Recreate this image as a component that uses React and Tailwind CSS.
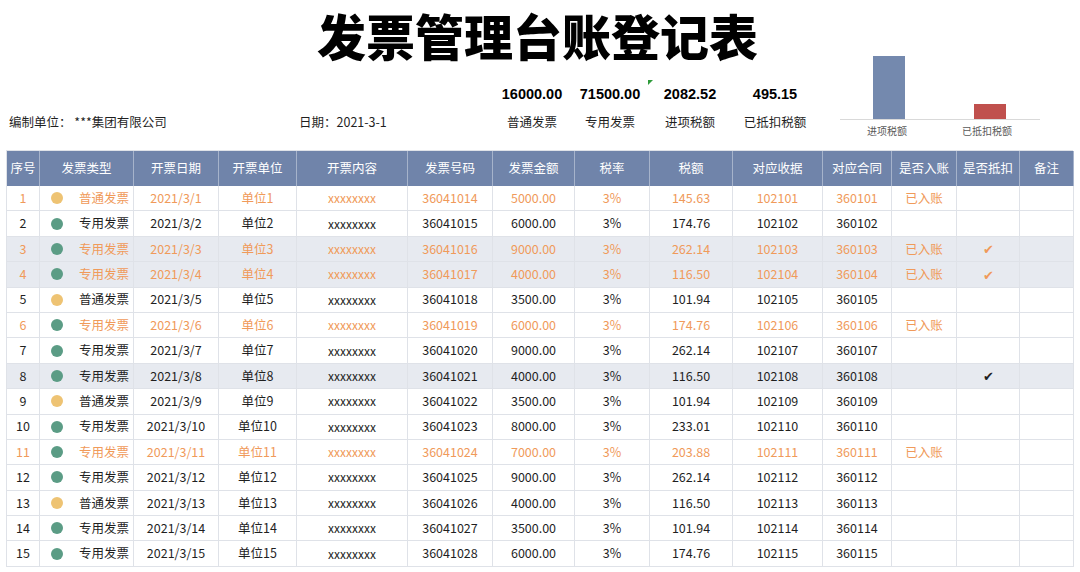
import React from "react";

const cols = "grid-cols-[33px_94px_85px_78px_111px_85px_82px_75px_83px_90px_69px_65px_63px_54px]";

const headers = ["序号", "发票类型", "开票日期", "开票单位", "开票内容", "发票号码", "发票金额", "税率", "税额", "对应收据", "对应合同", "是否入账", "是否抵扣", "备注"];

const amounts = ["5000.00","6000.00","9000.00","4000.00","3500.00","6000.00","9000.00","4000.00","3500.00","8000.00","7000.00","9000.00","4000.00","3500.00","6000.00"];
const taxes = ["145.63","174.76","262.14","116.50","101.94","174.76","262.14","116.50","101.94","233.01","203.88","262.14","116.50","101.94","174.76"];
const orangeRows = [1, 3, 4, 6, 11];
const grayRows = [3, 4, 8];
const yellowRows = [1, 5, 9, 13];
const booked = [1, 3, 4, 6, 11];
const checked = [3, 4, 8];

const rows = Array.from({ length: 15 }, (_, i) => {
  const n = i + 1;
  return {
    n,
    ordinary: yellowRows.includes(n),
    date: `2021/3/${n}`,
    unit: `单位${n}`,
    no: String(36041014 + i),
    amount: amounts[i],
    tax: taxes[i],
    receipt: String(102101 + i),
    contract: String(360101 + i),
    orange: orangeRows.includes(n),
    gray: grayRows.includes(n),
    booked: booked.includes(n),
    checked: checked.includes(n),
  };
});

function Cell({ children, className = "" }) {
  return (
    <div className={`flex items-center justify-center border-r border-b border-[#dfe2e8] ${className}`}>
      {children}
    </div>
  );
}

export default function App() {
  return (
    <div
      className="w-[1080px] h-[572px] bg-white overflow-hidden text-[#1f1f1f]"
      style={{ fontFamily: '"Noto Sans CJK SC", "Noto Sans", sans-serif' }}
    >
      {/* Title */}
      <h1 className="h-[69px] pr-[5px] text-center text-[49px] leading-[69px] font-black text-black whitespace-nowrap">
        发票管理台账登记表
      </h1>

      {/* Info row */}
      <div className="h-[81px] flex text-[12.5px]">
        <div className="w-[299px] pl-[9px] pt-[44px] leading-[18px]">
          编制单位：&nbsp;***集团有限公司
        </div>
        <div className="w-[194px] pt-[44px] leading-[18px]">日期：2021-3-1</div>

        {[
          ["16000.00", "普通发票", "w-[78px]"],
          ["71500.00", "专用发票", "w-[78px]"],
          ["2082.52", "进项税额", "w-[82px]"],
          ["495.15", "已抵扣税额", "w-[88px]"],
        ].map(([num, label, w], idx) => (
          <div key={label} className={`${w} relative flex flex-col items-center`}>
            {idx === 2 && (
              <svg className="absolute left-[-1px] top-[11px]" width="5" height="5" viewBox="0 0 5 5">
                <polygon points="0,0 5,0 0,5" fill="#2e9b3a" />
              </svg>
            )}
            <div
              className="mt-[16px] leading-[18px] text-[14.5px] font-bold text-black"
              style={{ fontFamily: '"Liberation Sans", Arial, sans-serif' }}
            >
              {num}
            </div>
            <div className="mt-[10px] leading-[18px]">{label}</div>
          </div>
        ))}

        {/* Chart */}
        <div className="ml-[21px] -mt-[12px] w-[200px] flex flex-col">
          <div className="h-[63px] flex items-end border-b border-[#d9d9d9]">
            <div className="ml-[33px] w-[32px] h-[63px] bg-[#7489ae]" />
            <div className="ml-[69px] w-[32px] h-[15px] bg-[#c0504d]" />
          </div>
          <div className="flex mt-[4px] text-[10px] leading-[14px] text-[#595959]">
            <div className="w-[96px] text-center">进项税额</div>
            <div className="w-[108px] text-center">已抵扣税额</div>
          </div>
        </div>
      </div>

      {/* Table */}
      <div className="ml-[6px] w-[1067px] border-l border-t border-[#dfe2e8] text-[12.5px]">
        <div className={`grid ${cols} h-[35px] bg-[#7084aa] text-white`}>
          {headers.map((h) => (
            <div key={h} className="flex items-center justify-center border-r border-[#a6b3cb]">
              {h}
            </div>
          ))}
        </div>
        {rows.map((r) => {
          const color = r.orange ? "text-[#f09a5a]" : "text-[#1f1f1f]";
          return (
            <div key={r.n} className={`grid ${cols} h-[25.4px] ${r.gray ? "bg-[#e7eaf0]" : "bg-white"} ${color}`}>
              <Cell>{r.n}</Cell>
              <div className="flex items-center justify-between pl-[11px] pr-[4px] border-r border-b border-[#dfe2e8]">
                <span className={`w-[12px] h-[12px] rounded-full ${r.ordinary ? "bg-[#eec373]" : "bg-[#5b9c85]"}`} />
                <span>{r.ordinary ? "普通发票" : "专用发票"}</span>
              </div>
              <Cell>{r.date}</Cell>
              <Cell>{r.unit}</Cell>
              <Cell className="text-[12px]">xxxxxxxx</Cell>
              <Cell>{r.no}</Cell>
              <Cell>{r.amount}</Cell>
              <Cell>3%</Cell>
              <Cell>{r.tax}</Cell>
              <Cell>{r.receipt}</Cell>
              <Cell>{r.contract}</Cell>
              <Cell>{r.booked ? "已入账" : ""}</Cell>
              <Cell className="text-[13px]">{r.checked ? "✔" : ""}</Cell>
              <Cell></Cell>
            </div>
          );
        })}
      </div>
    </div>
  );
}
